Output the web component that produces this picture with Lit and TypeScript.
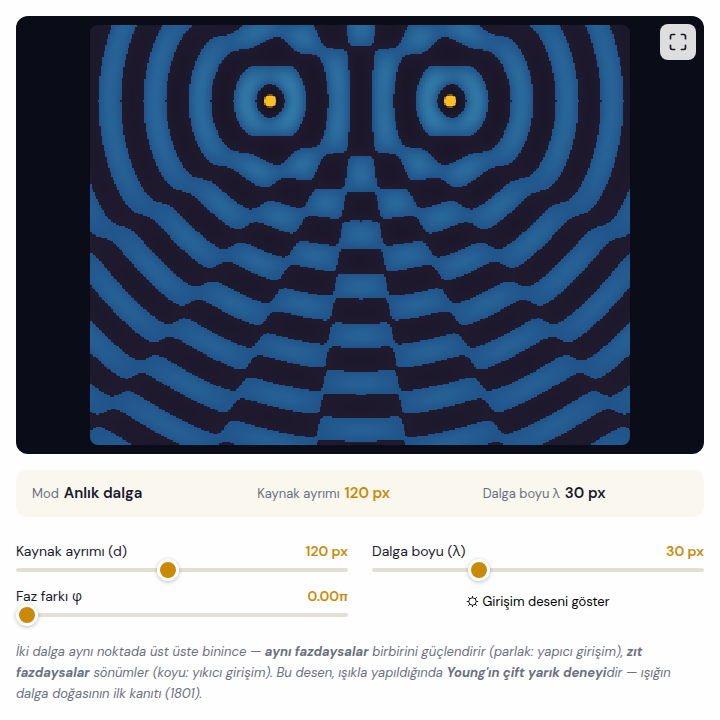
import { LitElement, html, css } from "lit";
import { customElement, state, query } from "lit/decorators.js";

const W = 360;
const H = 280;
const SOURCE_Y = 50;

@customElement("app-root")
export class AppRoot extends LitElement {
  static styles = css`
    :host {
      display: block;
      box-sizing: border-box;
      min-height: 100vh;
      padding: 16px;
      background: #fefefe;
      color: #1a1a2e;
      font: 14px/20px "DM Sans", "Open Sans", "Liberation Sans", sans-serif;
    }
    * {
      box-sizing: border-box;
    }
    .stage {
      position: relative;
      display: flex;
      justify-content: center;
      padding: 9px;
      border-radius: 12px;
      background: #0a0c18;
    }
    canvas {
      display: block;
      width: 100%;
      max-width: 540px;
      border-radius: 8px;
      image-rendering: pixelated;
    }
    .full {
      position: absolute;
      top: 8px;
      right: 8px;
      display: grid;
      place-items: center;
      width: 36px;
      height: 36px;
      padding: 0;
      border: 0;
      border-radius: 8px;
      background: #dededf;
      color: #1a1a2e;
    }
    .info {
      display: grid;
      grid-template-columns: repeat(3, 1fr);
      gap: 20px;
      margin-top: 16px;
      padding: 12px 16px;
      border-radius: 10px;
      background: #faf7ef;
      line-height: 23px;
    }
    .info span {
      margin-right: 5px;
      color: #6b7080;
      font-size: 13px;
    }
    .info strong {
      font-size: 15px;
      font-weight: 600;
    }
    .info .accent,
    output {
      color: #c98a08;
    }
    .controls {
      display: grid;
      grid-template-columns: repeat(2, 1fr);
      gap: 6px 24px;
      margin-top: 24px;
    }
    .row {
      display: flex;
      justify-content: space-between;
    }
    output {
      font-weight: 600;
    }
    input {
      display: block;
      appearance: none;
      width: 100%;
      height: 4px;
      margin: 7px 0 8px;
      border-radius: 2px;
      background: #e4dfd3;
    }
    input::-webkit-slider-thumb {
      appearance: none;
      width: 22px;
      height: 22px;
      border: 3px solid #fff;
      border-radius: 50%;
      background: #c98a08;
      box-shadow: 0 1px 4px rgb(0 0 0 / 25%);
    }
    .toggle {
      display: flex;
      align-items: center;
      align-self: start;
      justify-content: center;
      gap: 3px;
      height: 30px;
      padding: 0;
      border: 0;
      background: none;
      color: #000;
      font-family: inherit;
      font-size: 13px;
    }
    p {
      margin: 16px 0 0;
      color: #6b7080;
      font-size: 13px;
      font-style: italic;
      line-height: 21px;
    }
  `;

  @state() private gap = 120;
  @state() private wave = 30;
  @state() private phase = 0;
  @state() private pattern = false;
  @query("canvas") private canvas!: HTMLCanvasElement;

  updated() {
    const g = this.canvas.getContext("2d")!;
    const img = g.createImageData(W, H);
    const left = (W - this.gap) / 2;
    const right = left + this.gap;
    const k = (2 * Math.PI) / this.wave;
    const start = (2 * Math.PI) / 3;
    const amp = (r: number) => Math.pow(r + 1, -0.6);
    for (let y = 0; y < H; y++) {
      for (let x = 0; x < W; x++) {
        const a = Math.hypot(x - left, y - SOURCE_Y);
        const b = Math.hypot(x - right, y - SOURCE_Y);
        const pa = k * a - start;
        const pb = k * b - start + this.phase * Math.PI;
        let v = amp(a) * Math.sin(pa) + amp(b) * Math.sin(pb);
        if (this.pattern) v = Math.abs(Math.cos((pa - pb) / 2)) * (amp(a) + amp(b));
        const i = (y * W + x) * 4;
        if (v > 0) {
          const t = Math.min(1, v * 4);
          img.data[i] = 32 + 18 * t;
          img.data[i + 1] = 84 + 38 * t;
          img.data[i + 2] = 138 + 30 * t;
        } else {
          const t = Math.min(1, -v * 1.2);
          img.data[i] = 31 - 20 * t;
          img.data[i + 1] = 26 - 14 * t;
          img.data[i + 2] = 46 - 24 * t;
        }
        img.data[i + 3] = 255;
      }
    }
    g.putImageData(img, 0, 0);
    g.fillStyle = "#fbbf24";
    for (const x of [left, right]) {
      g.beginPath();
      g.arc(x, SOURCE_Y + 0.5, 4, 0, Math.PI * 2);
      g.fill();
    }
  }

  private read(e: Event) {
    return Number((e.target as HTMLInputElement).value);
  }

  render() {
    return html`
      <div class="stage">
        <canvas width=${W} height=${H}></canvas>
        <button class="full" aria-label="Tam ekran">
          <svg width="20" height="20" viewBox="0 0 24 24" fill="none" stroke="currentColor"
            stroke-width="2" stroke-linecap="round" stroke-linejoin="round">
            <path d="M8 3H5a2 2 0 0 0-2 2v3m18 0V5a2 2 0 0 0-2-2h-3m0 18h3a2 2 0 0 0 2-2v-3M3 16v3a2 2 0 0 0 2 2h3" />
          </svg>
        </button>
      </div>
      <div class="info">
        <div><span>Mod</span><strong>${this.pattern ? "Girişim deseni" : "Anlık dalga"}</strong></div>
        <div><span>Kaynak ayrımı</span><strong class="accent">${this.gap} px</strong></div>
        <div><span>Dalga boyu λ</span><strong>${this.wave} px</strong></div>
      </div>
      <div class="controls">
        <div>
          <div class="row"><label for="gap">Kaynak ayrımı (d)</label><output for="gap">${this.gap} px</output></div>
          <input id="gap" type="range" min="20" max="240" .value=${String(this.gap)}
            @input=${(e: Event) => (this.gap = this.read(e))} />
        </div>
        <div>
          <div class="row"><label for="wave">Dalga boyu (λ)</label><output for="wave">${this.wave} px</output></div>
          <input id="wave" type="range" min="12" max="70" .value=${String(this.wave)}
            @input=${(e: Event) => (this.wave = this.read(e))} />
        </div>
        <div>
          <div class="row"><label for="phase">Faz farkı φ</label><output for="phase">${this.phase.toFixed(2)}π</output></div>
          <input id="phase" type="range" min="0" max="2" step="0.01" .value=${String(this.phase)}
            @input=${(e: Event) => (this.phase = this.read(e))} />
        </div>
        <button class="toggle" @click=${() => (this.pattern = !this.pattern)}>
          <svg width="13" height="13" viewBox="0 0 13 13" fill="none" stroke="currentColor" stroke-width="0.9" aria-hidden="true">
            <circle cx="6.5" cy="6.5" r="3.7" />
            <path d="M6.5 2.8V1M6.5 10.2V12M2.8 6.5H.8M10.2 6.5h2M3.9 3.9 2.2 2.2M9.1 3.9l1.7-1.7M3.9 9.1l-1.7 1.7M9.1 9.1l1.7 1.7" />
          </svg>
          Girişim deseni göster
        </button>
      </div>
      <p>
        İki dalga aynı noktada üst üste binince — <strong>aynı fazdaysalar</strong> birbirini güçlendirir
        (parlak: yapıcı girişim), <strong>zıt fazdaysalar</strong> sönümler (koyu: yıkıcı girişim). Bu desen,
        ışıkla yapıldığında <strong>Young'ın çift yarık deneyi</strong>dir — ışığın dalga doğasının ilk kanıtı (1801).
      </p>
    `;
  }
}
